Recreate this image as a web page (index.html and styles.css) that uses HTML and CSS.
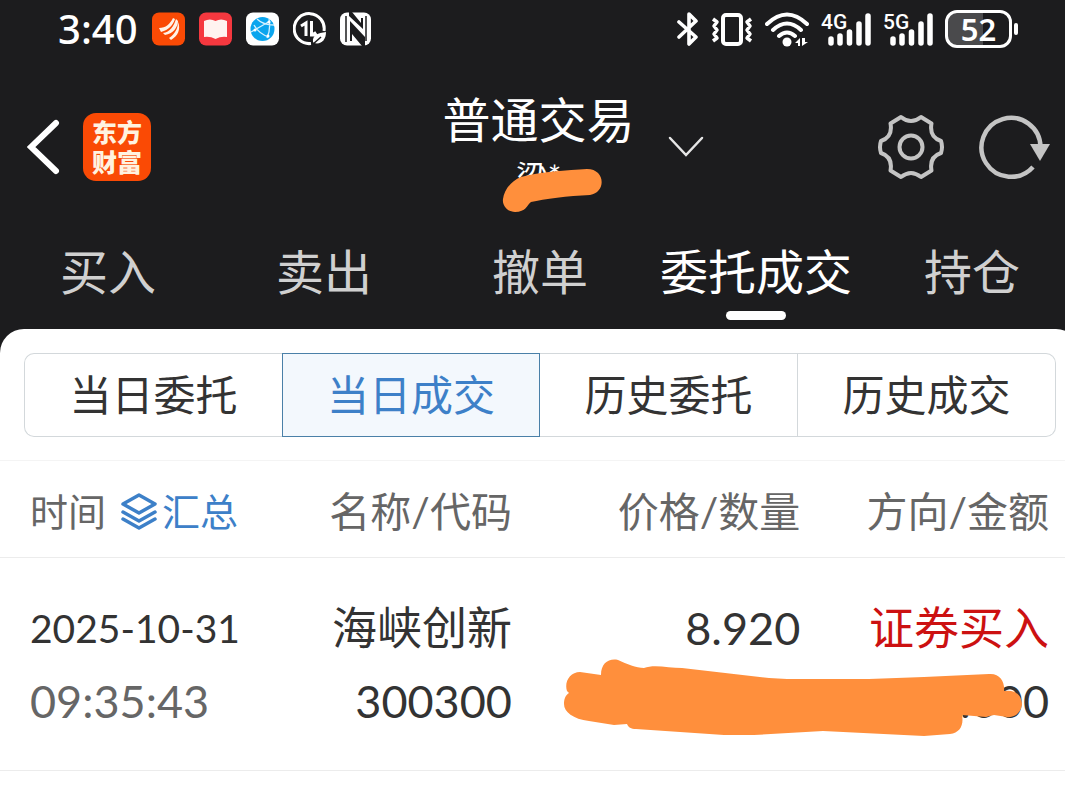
FILE: index.html
```html
<!DOCTYPE html>
<html lang="zh-CN">
<head>
    <meta charset="UTF-8">
    <meta name="viewport" content="width=device-width, initial-scale=1.0">
    <title>普通交易</title>
    <link rel="stylesheet" href="styles.css">
</head>
<body>
    <div class="screen">
        <div class="status-bar">
            <div class="status-left">
                <span class="clock">3:40</span>
                <svg width="33" height="34" viewBox="0 0 33 34">
                    <rect width="33" height="33" y="0.5" rx="7" fill="#fa4a05"/>
                    <path d="M7 16C14 16 18 12 21 6L23 7C21 13 17 18 9 20ZM11 21C18 20 22 14 24 7L26 9C26 15 21 22 13 23ZM17 26C23 22 26 16 26 10C29 17 26 24 19 28Z" fill="#fff3e8"/>
                </svg>
                <svg width="33" height="34" viewBox="0 0 33 34">
                    <rect width="33" height="33" y="0.5" rx="7" fill="#f5383f"/>
                    <path d="M5 9Q11 6 16.500 9Q22 6 28 9V25Q22 24 16.500 27Q11 24 5 25Z" fill="#fff3f0"/>
                </svg>
                <svg width="33" height="34" viewBox="0 0 33 34">
                    <rect width="33" height="33" y="0.5" rx="7" fill="#fff"/>
                    <circle cx="16.500" cy="17" r="12" fill="#0ba5ee"/>
                    <path d="M11 7Q17 13 28 13M23 7Q25 17 21 26M5 20Q14 15 24 9M8 13Q13 22 23 25" fill="none" stroke="#d5f1ff" stroke-width="1.300"/>
                    <circle cx="23" cy="10" r="1.500" fill="#fff"/><circle cx="9" cy="18" r="1.500" fill="#fff"/><circle cx="22" cy="24" r="1.500" fill="#fff"/>
                </svg>
                <svg width="33" height="34" viewBox="0 0 33 34" fill="none" stroke="#fff">
                    <path d="M18 31.500A15 15 0 1 1 31 19" stroke-width="3"/>
                    <path d="M8 14L13 11V24M18.500 9V23H23L21 20" stroke-width="3"/>
                    <path d="M20 30C19 23 25 21 33 20C33 28 28 33 21 31Z" fill="#fff" stroke="none"/>
                    <path d="M19 33L28 25" stroke="#1c1c1e" stroke-width="1.500"/>
                </svg>
                <svg width="31" height="34" viewBox="0 0 31 34">
                    <rect y="0.5" width="31" height="33" rx="7" fill="#fff"/>
                    <path d="M6 4V30" fill="none" stroke="#1c1c1e" stroke-width="1.500"/>
                    <path d="M9 0L12 0L21 11V6H23V17L9 4ZM10 9L25 25V34H22L12 22V29H10Z" fill="#1c1c1e"/>
                    <path d="M26 4V29" fill="none" stroke="#1c1c1e" stroke-width="1.500"/>
                </svg>
            </div>
            <div class="status-right">
                <svg width="22" height="36" viewBox="0 0 22 36" fill="none" stroke="#fff" stroke-width="3.600" stroke-linecap="round" stroke-linejoin="round">
                    <path d="M2 11L19 26L12 33V3L19 10L2 26"/>
                </svg>
                <svg width="42" height="36" viewBox="0 0 42 36" fill="none" stroke="#fff" stroke-width="4" stroke-linejoin="round">
                    <rect x="12" y="4" width="18" height="29" rx="3"/>
                    <path d="M2 8L6 11L3 15L6 19L3 23L6 27L2 30M40 8L36 11L39 15L36 19L39 23L36 27L40 30" stroke-width="3.500"/>
                </svg>
                <svg width="44" height="36" viewBox="0 0 44 36" fill="none" stroke="#fff" stroke-width="4" stroke-linecap="round">
                    <path d="M2 13Q22 -6 42 13M8 19Q22 6 36 19M14 25Q22 18 30 25"/>
                    <circle cx="22" cy="31" r="4.500" fill="#fff" stroke="none"/>
                    <path d="M30 32L35 27V35H33V32ZM37 27V35L43 31H40V27Z" fill="#fff" stroke="none"/>
                </svg>
                <svg width="50" height="36" viewBox="0 0 50 36" fill="none" stroke="#fff" stroke-width="5.500" stroke-linecap="round">
                    <text x="0" y="18" class="net">4G</text>
                    <path d="M10 28V32M19 25V32M28.500 21V32M38 13V32M47 5V32"/>
                </svg>
                <svg width="50" height="36" viewBox="0 0 50 36" fill="none" stroke="#fff" stroke-width="5.500" stroke-linecap="round">
                    <text x="0" y="18" class="net">5G</text>
                    <path d="M10 28V32M19 25V32M28.500 21V32M38 13V32M47 5V32"/>
                </svg>
                <div class="battery">
                    <span class="level">52</span>
                    <span class="nub"></span>
                </div>
            </div>
        </div>

        <header class="header">
            <div class="header-left">
                <button class="icon-btn" aria-label="返回">
                    <svg width="33" height="56" viewBox="0 0 33 56" fill="none" stroke="#fff" stroke-width="6" stroke-linecap="round">
                        <path d="M29 4L4 28L29 52" stroke-linejoin="miter"/>
                    </svg>
                </button>
                <div class="logo">东方<br>财富</div>
            </div>
            <div class="account">
                <h1>普通交易</h1>
                <p>梁*</p>
                <svg class="mark" width="100" height="46" viewBox="0 0 100 46">
                    <path d="M1 31C2 22 9 13 19 9C37 4 66 2 85 1C104 1 104 25 88 27C66 28 42 31 29 34C25 37 24 44 13 44C6 44 0 38 1 31Z" fill="#ff8f3c"/>
                </svg>
            </div>
            <div class="header-right">
                <button class="icon-btn" aria-label="切换账户">
                    <svg width="36" height="22" viewBox="0 0 36 22" fill="none" stroke="#e6e6e6" stroke-width="2.500" stroke-linecap="round">
                        <path d="M2 2L18 19L34 2"/>
                    </svg>
                </button>
                <div class="tools">
                    <button class="icon-btn" aria-label="设置">
                        <svg width="66" height="66" viewBox="0 0 66 66" fill="none" stroke="#c4c4c4" stroke-width="4">
                            <path d="M12.500 9.500L23 3Q33 11 43 3L53.500 9.500Q51 23 63 27Q65 33 63 39Q51 43 53.500 56.500L43 63Q33 55 23 63L12.500 56.500Q15 43 3 39Q1 33 3 27Q15 23 12.500 9.500Z" stroke-linejoin="round"/>
                            <circle cx="33" cy="33" r="11.500"/>
                        </svg>
                    </button>
                    <button class="icon-btn" aria-label="刷新">
                        <svg width="71" height="66" viewBox="0 0 71 66" fill="none" stroke="#c4c4c4" stroke-width="4.500">
                            <path d="M54 53A29.500 29.500 0 1 1 61.500 33"/>
                            <path d="M51 30H71L61 47Z" fill="#c4c4c4" stroke="none"/>
                        </svg>
                    </button>
                </div>
            </div>
        </header>

        <nav class="tabs">
            <a href="#">买入</a>
            <a href="#">卖出</a>
            <a href="#">撤单</a>
            <a href="#" class="active">委托成交</a>
            <a href="#">持仓</a>
        </nav>

        <main class="panel">
            <div class="segments">
                <button>当日委托</button>
                <button class="active">当日成交</button>
                <button>历史委托</button>
                <button>历史成交</button>
            </div>

            <table class="deals">
                <thead>
                    <tr>
                        <th class="col-time">
                            <div class="time-head">
                                <span>时间</span>
                                <button class="summary">
                                    <svg width="38" height="44" viewBox="0 0 38 44" fill="none" stroke="#3d80c8" stroke-width="3.500" stroke-linecap="round" stroke-linejoin="round">
                                        <path d="M19 8L35 17L19 26L3 17ZM3 25L19 34L35 25M3 32L19 41L35 32"/>
                                    </svg>
                                    汇总
                                </button>
                            </div>
                        </th>
                        <th class="col-name">名称/代码</th>
                        <th class="col-price">价格/数量</th>
                        <th class="col-side">方向/金额</th>
                    </tr>
                </thead>
                <tbody>
                    <tr>
                        <td>
                            <span class="line date">2025-10-31</span>
                            <span class="line time">09:35:43</span>
                        </td>
                        <td>
                            <span class="line">海峡创新</span>
                            <span class="line">300300</span>
                        </td>
                        <td>
                            <span class="line">8.920</span>
                        </td>
                        <td>
                            <span class="line buy">证券买入</span>
                            <span class="line amount">.000
                                <svg class="mark" width="458" height="78" viewBox="0 0 458 78">
                                    <path d="M3 32C0 23 6 13 16 13L37 16C37 4 45-1 54 1C63 5 72 9 80 9C90 5 105 9 118 9L205 19L223 20H305L360 18L425 15C436 14 441 23 440 32C452 30 458 37 458 46C457 54 450 59 443 58L430 56L422 58L398 56C400 66 396 74 386 75L360 77L259 72L190 76H160L72 70C67 70 64 68 63 65L50 66L25 62C9 60 0 53 0 45C0 39 2 36 5 34Z" fill="#ff8f3c"/>
                                </svg>
                            </span>
                        </td>
                    </tr>
                </tbody>
            </table>
        </main>
    </div>
</body>
</html>
```
FILE: styles.css
```css
:root {
    --dark: #1c1c1e;
    --blue: #3d80c8;
    --red: #cc1111;
    --text: #333333;
    --muted: #666666;
    --border: #d3d8db;
    --line: #ececec;
}

* {
    margin: 0;
    padding: 0;
    box-sizing: border-box;
}

body {
    background: var(--dark);
    color: var(--text);
    font-family: Lato, 'Noto Sans CJK SC', sans-serif;
    overflow-x: hidden;
}

button {
    background: none;
    border: none;
    color: inherit;
    font: inherit;
    cursor: pointer;
}

svg {
    display: block;
    flex-shrink: 0;
}

/* the last tab runs slightly past the right edge */
.screen {
    width: calc(100% + 15px);
    min-height: 100vh;
    display: flex;
    flex-direction: column;
}

.status-bar {
    height: 58px;
    padding: 0 62px 0 58px;
    display: flex;
    align-items: center;
    justify-content: space-between;
    color: white;
}

.status-left,
.status-right {
    display: flex;
    align-items: center;
    gap: 12px;
}

.status-left {
    gap: 14px;
}

.clock {
    font-family: 'Noto Sans', sans-serif;
    font-size: 40px;
    font-weight: 500;
    line-height: 58px;
}

.net {
    font: 500 21px Roboto, sans-serif;
    fill: white;
    stroke: none;
}

.battery {
    display: flex;
    align-items: center;
    gap: 2px;
}

.level {
    width: 67px;
    border: 3px solid white;
    border-radius: 12px;
    background: linear-gradient(to right, #4a4a4c 58%, transparent 58%);
    font: 600 31px/32px 'Noto Sans', sans-serif;
    text-align: center;
}

.nub {
    width: 4px;
    height: 12px;
    border-radius: 2px;
    background: white;
}

.header {
    padding: 32px 30px 36px 27px;
    display: grid;
    grid-template-columns: 1fr auto 1fr;
    align-items: center;
    color: white;
}

.header-left {
    display: flex;
    align-items: center;
    gap: 23px;
}

.logo {
    width: 68px;
    height: 68px;
    padding-top: 4px;
    border-radius: 13px;
    background: #fa4a05;
    color: #fff3e0;
    font-size: 25px;
    font-weight: 900;
    line-height: 30px;
    text-align: center;
}

.account {
    position: relative;
    text-align: center;
}

.account h1 {
    font-size: 48px;
    font-weight: 400;
    line-height: 60px;
}

.account p {
    font-size: 32px;
    line-height: 54px;
}

.account .mark {
    position: absolute;
    left: 60px;
    top: 78px;
}

.header-right {
    padding-left: 33px;
    display: flex;
    align-items: center;
    justify-content: space-between;
}

.tools {
    display: flex;
    gap: 35px;
}

.tabs {
    height: 89px;
    display: flex;
}

.tabs a {
    flex: 1;
    display: flex;
    flex-direction: column;
    align-items: center;
    color: #d0d0d0;
    font-size: 48px;
    line-height: 64px;
    text-decoration: none;
    white-space: nowrap;
}

.tabs .active {
    color: white;
}

.tabs .active::after {
    content: '';
    width: 60px;
    height: 9px;
    margin-top: 7px;
    border-radius: 5px;
    background: white;
}

.panel {
    flex: 1;
    padding-top: 24px;
    border-radius: 24px 24px 0 0;
    background: white;
}

.segments {
    margin: 0 24px 23px;
    display: grid;
    grid-template-columns: repeat(4, 1fr);
}

.segments button {
    height: 84px;
    border: 1px solid var(--border);
    border-left-width: 0;
    font-size: 42px;
    line-height: 60px;
}

.segments button:first-child {
    border-left-width: 1px;
    border-right-width: 0;
    border-radius: 10px 0 0 10px;
}

.segments button:last-child {
    border-radius: 0 10px 10px 0;
}

.segments .active {
    border: 1px solid #4a80a8;
    background: #f3f8fd;
    color: var(--blue);
}

.deals {
    width: 100%;
    table-layout: fixed;
    border-collapse: collapse;
}

.deals tr {
    border-top: 1px solid #f4f4f4;
    border-bottom: 1px solid var(--line);
}

.deals th {
    height: 97px;
    color: var(--muted);
    font-size: 41px;
    font-weight: 400;
    text-align: right;
    white-space: nowrap;
}

.deals .col-time {
    width: 27%;
    padding-left: 30px;
    font-size: 38px;
}

.deals .col-name {
    width: 20.4%;
}

.deals .col-price {
    width: 26.7%;
}

.deals .col-side {
    padding-right: 31px;
}

.time-head {
    display: flex;
    align-items: center;
    gap: 14px;
}

.summary {
    display: flex;
    align-items: center;
    gap: 4px;
    color: var(--blue);
}

.deals td {
    padding: 34px 0 32px;
    font-size: 45px;
    text-align: right;
    vertical-align: top;
    white-space: nowrap;
}

.deals td:first-child {
    padding-left: 30px;
    text-align: left;
}

.deals td:last-child {
    padding-right: 31px;
}

.line {
    display: block;
    line-height: 73px;
}

.date {
    font-size: 39px;
}

.time {
    color: var(--muted);
}

.buy {
    color: var(--red);
}

.amount {
    position: relative;
}

.amount .mark {
    position: absolute;
    right: 27px;
    top: -6px;
}
```
